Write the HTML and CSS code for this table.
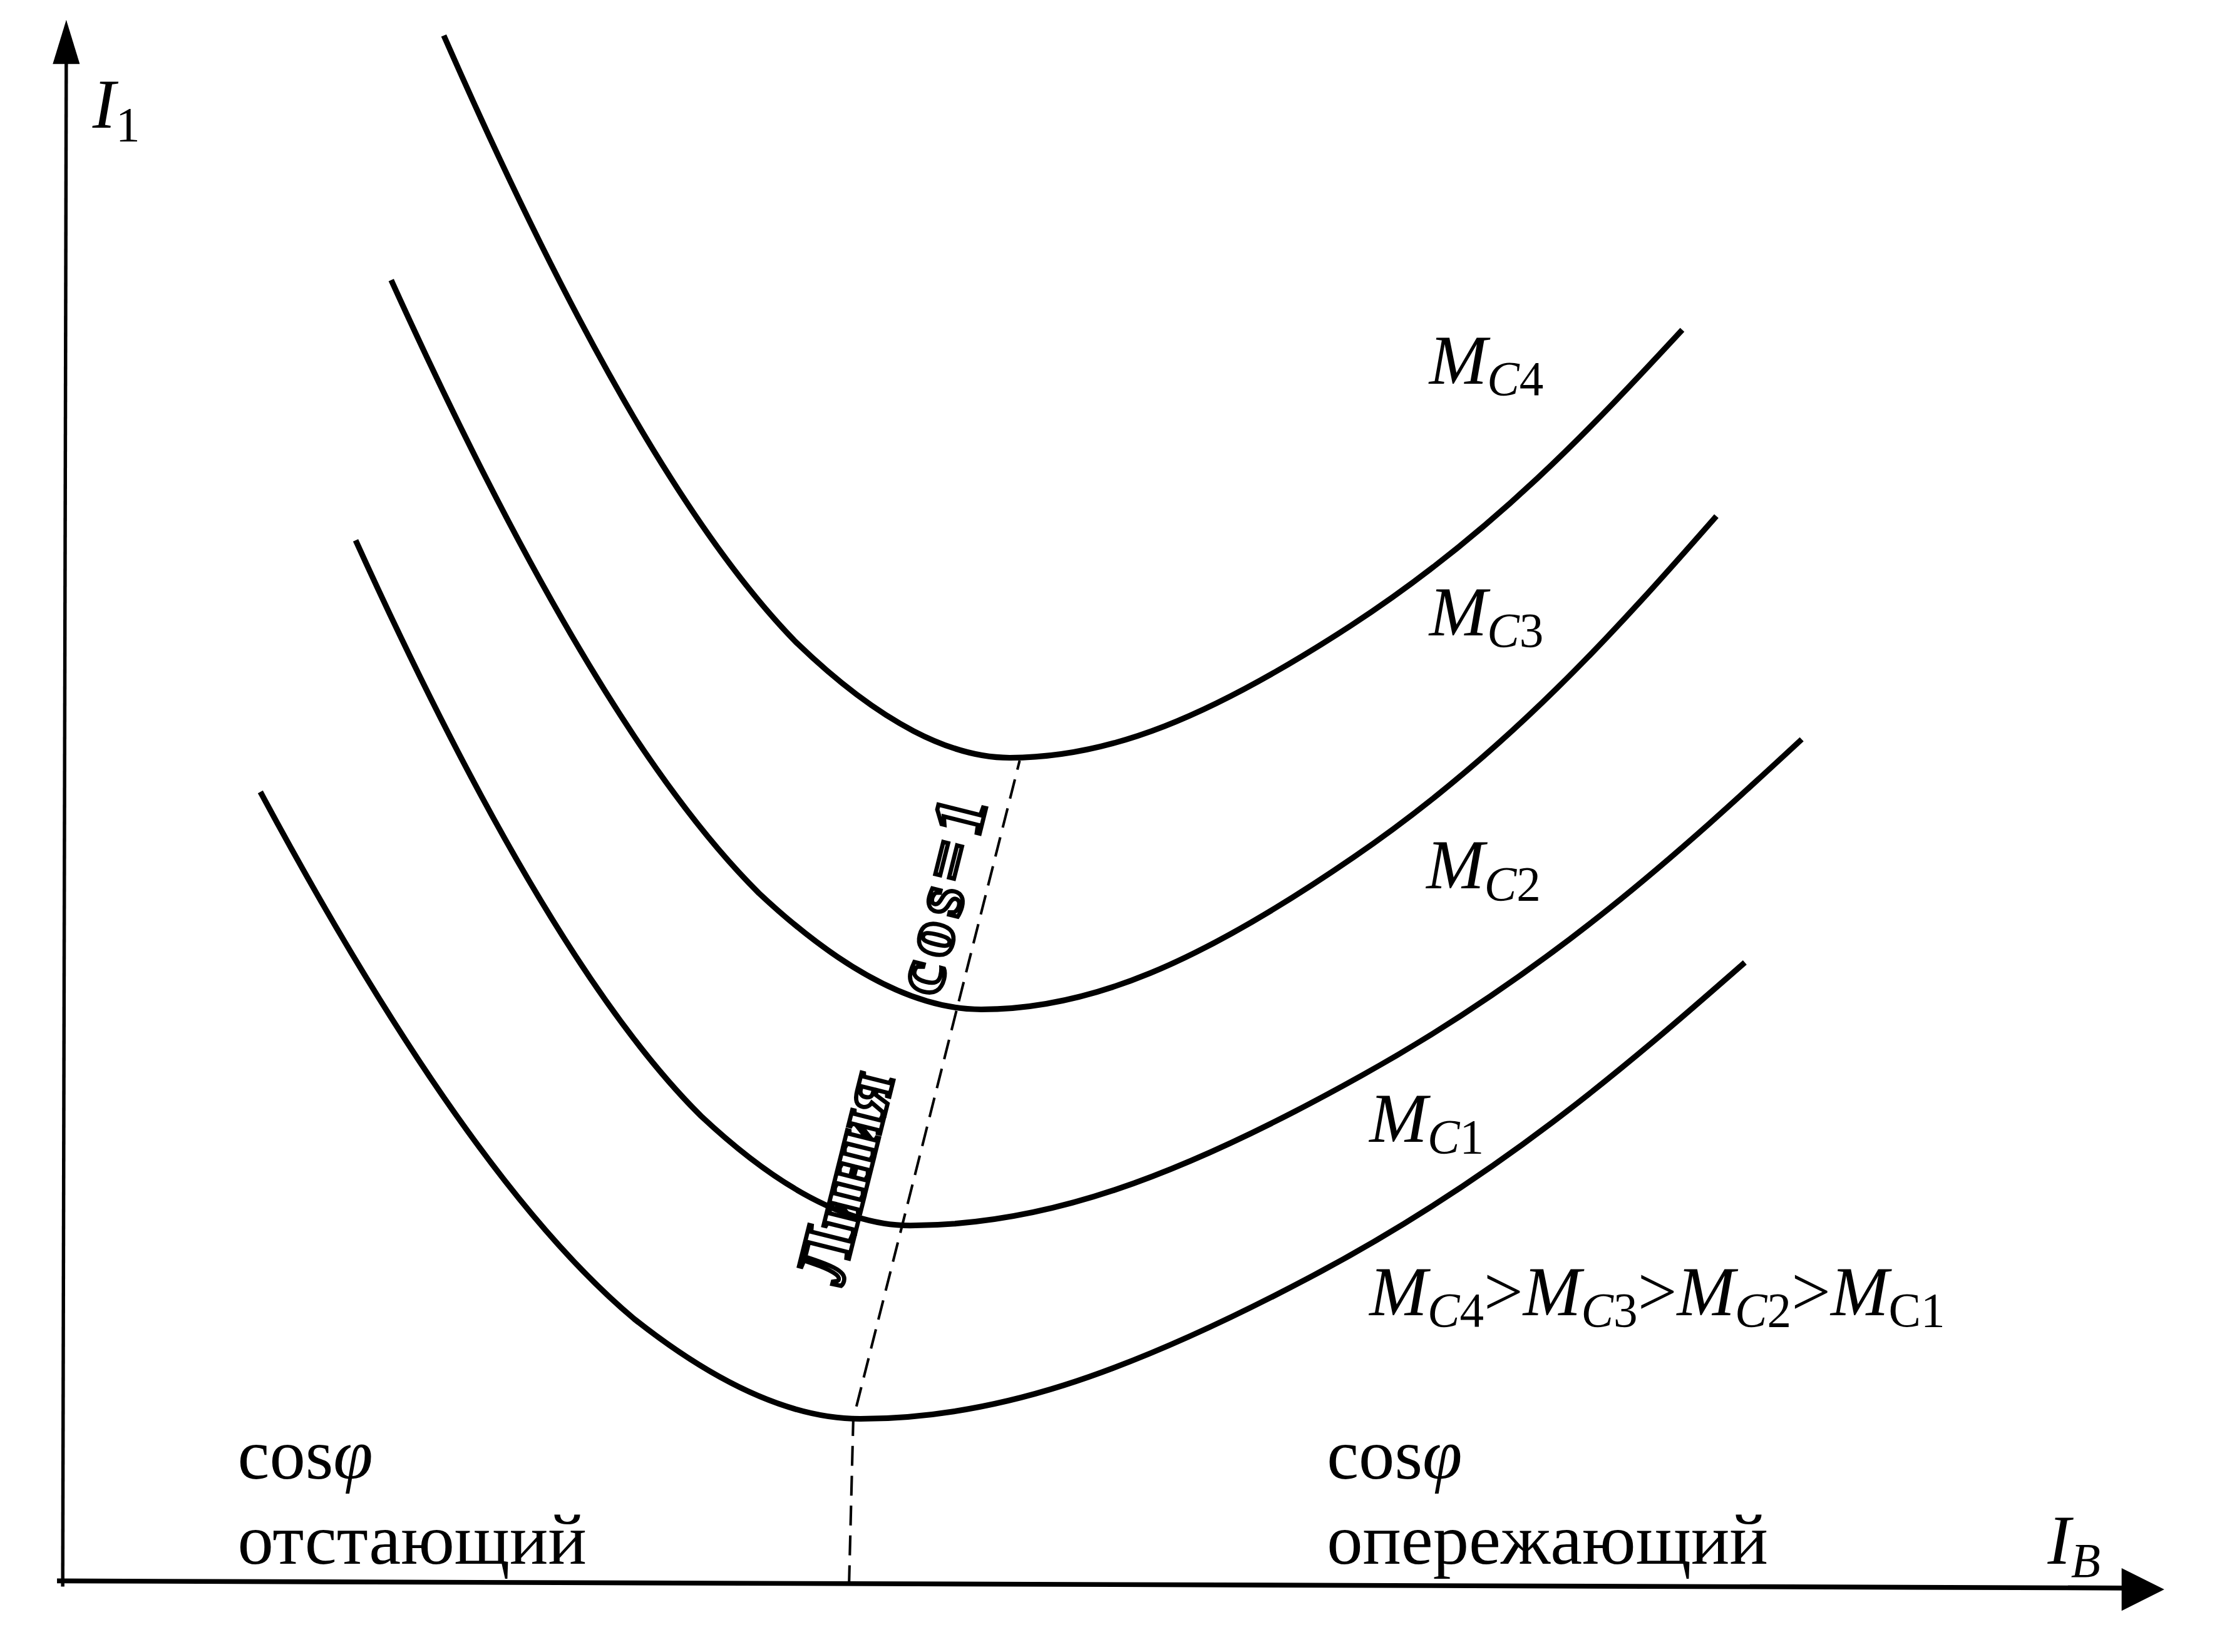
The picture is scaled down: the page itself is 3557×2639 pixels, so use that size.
FILE: index.html
```html
<!DOCTYPE html>
<html lang="ru">
<head>
<meta charset="utf-8">
<title>U-образные характеристики</title>
<link rel="stylesheet" href="styles.css">
</head>
<body>
<div class="canvas">
<svg class="chart" viewBox="0 0 1566 1162" xmlns="http://www.w3.org/2000/svg">
  <!-- axes -->
  <path class="axis" d="M44,1116 L46.5,40"/>
  <polygon class="arrow" points="46.5,14 37,45 56,45"/>
  <path class="axis axis-x" d="M40,1112 L1495,1117"/>
  <polygon class="arrow" points="1522,1118 1492,1103 1492,1133"/>

  <!-- curves -->
  <path class="curve" d="M312,25 C380,180 470,360 560,452 C620,510 670,533 710,533 C780,533 850,505 950,440 C1050,375 1120,300 1183,232"/>
  <path class="curve" d="M275,197 C346,353.5 439.8,535 533.6,628.2 C596.2,686.9 648.1,710 690,710 C766.5,710 843,677.7 952.1,602.8 C1061.7,527.8 1138.2,441.4 1207,363"/>
  <path class="curve" d="M250,380 C316.7,527 404.8,697.6 493,785.1 C551.9,840.3 600.6,862 640,862 C732.8,862 825.6,830.2 957.9,756.3 C1090.8,682.4 1183.6,597.3 1267,520"/>
  <path class="curve" d="M183,557 C255.2,691.5 350.5,847.6 445.9,927.7 C509.6,978.2 562.4,998 605,998 C697.1,998 789.1,968.1 920.4,898.8 C1052.2,829.5 1144.3,749.5 1227,677"/>

  <!-- cos = 1 line -->
  <path class="dash" d="M597,1115 L600,998 L717,535"/>

  <text class="rot" transform="translate(592,905) rotate(-76)">Линия</text>
  <text class="rot rot-cos" transform="translate(660,702) rotate(-76)">cos=1</text>

  <!-- labels -->
  <text class="lbl" x="65" y="90"><tspan class="it">I</tspan><tspan class="sub" dy="9">1</tspan></text>

  <text class="lbl" x="1005" y="270"><tspan class="it">M</tspan><tspan class="sub it" dy="8">C</tspan><tspan class="sub">4</tspan></text>
  <text class="lbl" x="1005" y="447"><tspan class="it">M</tspan><tspan class="sub it" dy="8">C</tspan><tspan class="sub">3</tspan></text>
  <text class="lbl" x="1003" y="625"><tspan class="it">M</tspan><tspan class="sub it" dy="8">C</tspan><tspan class="sub">2</tspan></text>
  <text class="lbl" x="963" y="803"><tspan class="it">M</tspan><tspan class="sub it" dy="8">C</tspan><tspan class="sub">1</tspan></text>

  <text class="lbl" x="963" y="925"><tspan class="it">M</tspan><tspan class="sub it" dy="8">C</tspan><tspan class="sub">4</tspan><tspan dy="-8">&gt;</tspan><tspan class="it">M</tspan><tspan class="sub it" dy="8">C</tspan><tspan class="sub">3</tspan><tspan dy="-8">&gt;</tspan><tspan class="it">M</tspan><tspan class="sub it" dy="8">C</tspan><tspan class="sub">2</tspan><tspan dy="-8">&gt;</tspan><tspan class="it">M</tspan><tspan class="sub" dy="8">C1</tspan></text>

  <text class="lbl txt" x="167" y="1040">cos<tspan class="it">φ</tspan></text>
  <text class="lbl txt" x="167" y="1100">отстающий</text>
  <text class="lbl txt" x="933" y="1040">cos<tspan class="it">φ</tspan></text>
  <text class="lbl txt" x="933" y="1100">опережающий</text>

  <text class="lbl" x="1440" y="1100"><tspan class="it">I</tspan><tspan class="sub it" dy="9">B</tspan></text>
</svg>
</div>
</body>
</html>
```

FILE: styles.css
```css
html, body {
  margin: 0;
  padding: 0;
  background: #ffffff;
}

.canvas {
  width: 3557px;
  height: 2639px;
  overflow: hidden;
  background: #ffffff;
}

.chart {
  display: block;
  width: 3557px;
  height: 2639px;
}

.axis {
  fill: none;
  stroke: #000;
  stroke-width: 2.4;
}

.axis-x {
  stroke-width: 3.4;
}

.arrow {
  fill: #000;
}

.curve {
  fill: none;
  stroke: #000;
  stroke-width: 4;
  stroke-linecap: butt;
}

.dash {
  fill: none;
  stroke: #000;
  stroke-width: 1.8;
  stroke-dasharray: 14 7;
}

.lbl {
  font-family: "Liberation Serif", "Times New Roman", serif;
  font-size: 49px;
  fill: #000;
}

.txt {
  font-size: 50.5px;
}

.it {
  font-style: italic;
}

.sub {
  font-size: 34px;
}

.rot {
  font-family: "Liberation Serif", "Times New Roman", serif;
  font-weight: bold;
  font-size: 50px;
  fill: #fff;
  stroke: #000;
  stroke-width: 3;
}

.rot-cos {
  letter-spacing: 5px;
}
```
